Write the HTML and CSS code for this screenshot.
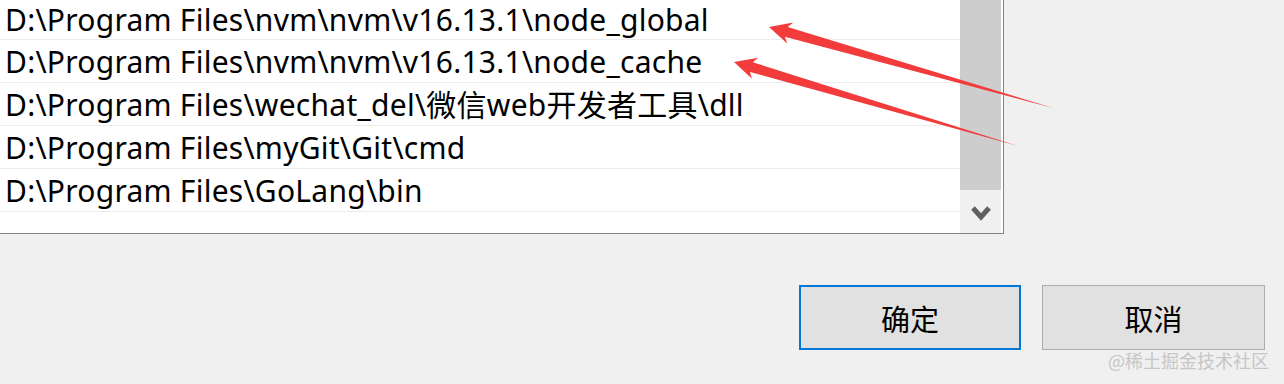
FILE: index.html
```html
<!DOCTYPE html>
<html lang="zh-CN">
<head>
    <meta charset="UTF-8">
    <title>编辑环境变量</title>
    <link rel="stylesheet" href="styles.css">
</head>
<body>
    <div class="dialog">
        <div class="listbox">
            <ul class="path-list">
                <li>D:\Program Files\nvm\nvm\v16.13.1\node_global</li>
                <li>D:\Program Files\nvm\nvm\v16.13.1\node_cache</li>
                <li>D:\Program Files\wechat_del\微信web开发者工具\dll</li>
                <li>D:\Program Files\myGit\Git\cmd</li>
                <li>D:\Program Files\GoLang\bin</li>
            </ul>
            <div class="scrollbar">
                <div class="thumb"></div>
                <div class="arrow-down">
                    <svg width="20" height="16" viewBox="0 0 20 16">
                        <polyline points="2,3 10,12 18,3" fill="none" stroke="#606060" stroke-width="5" stroke-linejoin="miter"/>
                    </svg>
                </div>
            </div>
        </div>

        <div class="buttons">
            <button class="btn btn-default">确定</button>
            <button class="btn">取消</button>
        </div>
    </div>

    <!-- annotation arrows drawn over the screenshot -->
    <svg class="arrows" width="1284" height="384" viewBox="0 0 1284 384">
        <polygon points="769,27 793.2,22.4 787.7,27.1 1053,108 784.9,36.7 787.2,43.6" fill="#f23c3c"/>
        <polygon points="734,62 758.2,57.7 752.7,62.3 1018,146 749.9,71.9 752,78.7" fill="#f23c3c"/>
    </svg>

    <div class="watermark">@稀土掘金技术社区</div>
</body>
</html>
```

FILE: styles.css
```css
* {
    margin: 0;
    padding: 0;
    box-sizing: border-box;
}

body {
    background: #f0f0f0;
    font-family: 'Noto Sans', 'Noto Sans CJK SC', sans-serif;
    width: 1284px;
    height: 384px;
    overflow: hidden;
    position: relative;
}

.listbox {
    display: flex;
    width: 1004px;
    height: 234px;
    background: #fff;
    border-right: 1px solid #828282;
    border-bottom: 1px solid #828282;
    overflow: hidden;
}

.path-list {
    list-style: none;
    flex: 1;
}

.path-list li {
    height: 43px;
    border-bottom: 1px solid #ececec;
    padding-left: 5px;
    font-size: 30px;
    letter-spacing: 0.25px;
    line-height: 43px;
    color: #000;
    white-space: nowrap;
}

/* list is scrolled a few pixels, so the first row shows shorter */
.path-list li:first-child {
    height: 40px;
    padding-top: 1px;
    line-height: 38px;
}

.scrollbar {
    width: 41px;
    margin-right: 2px;
    display: flex;
    flex-direction: column;
}

.thumb {
    height: 190px;
    background: #cdcdcd;
}

.arrow-down {
    flex: 1;
    background: #f0f0f0;
    display: flex;
    align-items: center;
    justify-content: center;
    padding-top: 2px;
}

.buttons {
    display: flex;
    justify-content: flex-end;
    gap: 21px;
    margin-top: 51px;
    padding-right: 19px;
}

.btn {
    width: 223px;
    height: 65px;
    background: #e1e1e1;
    border: 1px solid #adadad;
    font-family: 'Noto Sans CJK SC', sans-serif;
    font-size: 29px;
    color: #000;
}

.btn-default {
    width: 222px;
    border: 2px solid #0078d7;
}

.arrows {
    position: absolute;
    top: 0;
    left: 0;
    pointer-events: none;
}

.watermark {
    position: absolute;
    right: 15px;
    top: 347px;
    font-family: 'Noto Sans CJK SC', sans-serif;
    font-size: 18px;
    color: #c6c6c6;
}
```
